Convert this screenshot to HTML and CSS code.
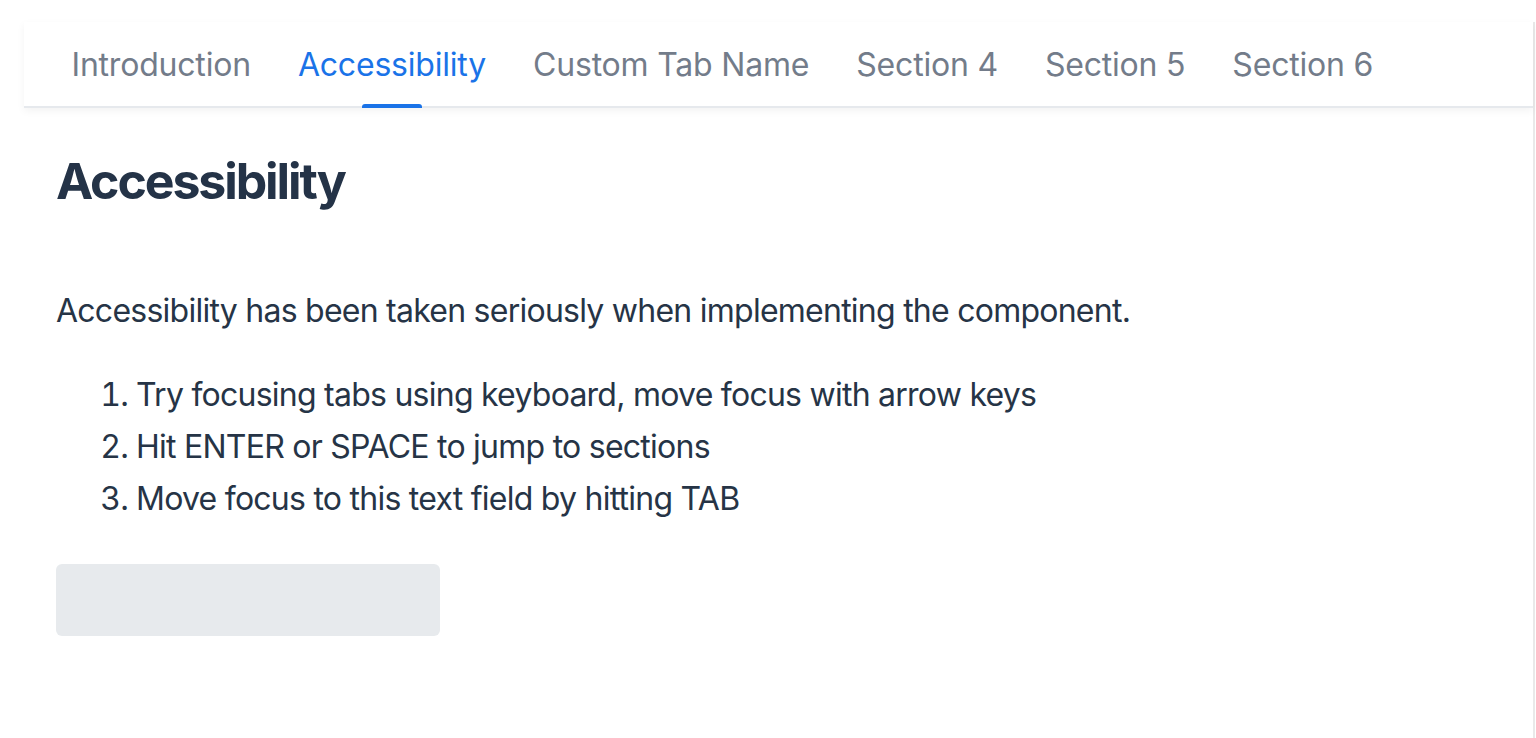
FILE: index.html
```html
<!DOCTYPE html>
<html lang="en">
<head>
<meta charset="utf-8">
<title>Tabs</title>
<link rel="stylesheet" href="styles.css">
</head>
<body>
<div class="page">
  <nav class="tabs" role="tablist">
    <button class="tab" role="tab">Introduction</button>
    <button class="tab active" role="tab" aria-selected="true">Accessibility</button>
    <button class="tab" role="tab">Custom Tab Name</button>
    <button class="tab" role="tab">Section 4</button>
    <button class="tab" role="tab">Section 5</button>
    <button class="tab" role="tab">Section 6</button>
  </nav>
  <section class="content">
    <h2 class="title">Accessibility</h2>
    <p class="text">Accessibility has been taken seriously when implementing the component.</p>
    <ol class="steps">
      <li>Try focusing tabs using keyboard, move focus with arrow keys</li>
      <li>Hit ENTER or SPACE to jump to sections</li>
      <li>Move focus to this text field by hitting TAB</li>
    </ol>
    <input class="field" type="text" aria-label="Text field">
  </section>
</div>
</body>
</html>
```

FILE: styles.css
```css
html, body {
  margin: 0;
  padding: 0;
  background: #ffffff;
}
body {
  font-family: Inter, "Noto Sans", "Liberation Sans", sans-serif;
  color: #263446;
  overflow: hidden;
}
.page {
  margin: 22px 0 0 24px;
  width: 1509px;
  height: 716px;
  border-right: 2px solid #e9e9e9;
}
.tabs {
  display: flex;
  height: 84px;
  padding: 0 24px;
  border-bottom: 2px solid #e6e9ed;
  box-shadow: 0 3px 8px rgba(0, 0, 0, 0.05);
}
.tab {
  position: relative;
  display: flex;
  align-items: center;
  padding: 0 23.5px;
  border: 0;
  background: none;
  font-family: inherit;
  font-size: 32px;
  letter-spacing: -0.2px;
  color: #737c8a;
  cursor: pointer;
}
.tab.active {
  color: #1a73e8;
}
.tab.active::after {
  content: "";
  position: absolute;
  left: 50%;
  bottom: -2px;
  width: 60px;
  height: 4px;
  margin-left: -30px;
  border-radius: 3px 3px 0 0;
  background: #1a73e8;
}
.content {
  padding: 43px 32px 0;
}
.title {
  margin: 0;
  font-size: 50px;
  line-height: 60px;
  font-weight: 700;
  letter-spacing: -2.1px;
  color: #243347;
}
.text {
  margin: 74px 0 0;
  font-size: 32px;
  line-height: 52px;
  letter-spacing: -0.75px;
}
.steps {
  margin: 32px 0 0;
  padding-left: 80px;
  font-size: 32px;
  line-height: 52px;
  letter-spacing: -0.75px;
}
.field {
  display: block;
  margin-top: 39px;
  width: 384px;
  height: 72px;
  box-sizing: border-box;
  border: 0;
  border-radius: 6px;
  background: #e7eaed;
}
```
